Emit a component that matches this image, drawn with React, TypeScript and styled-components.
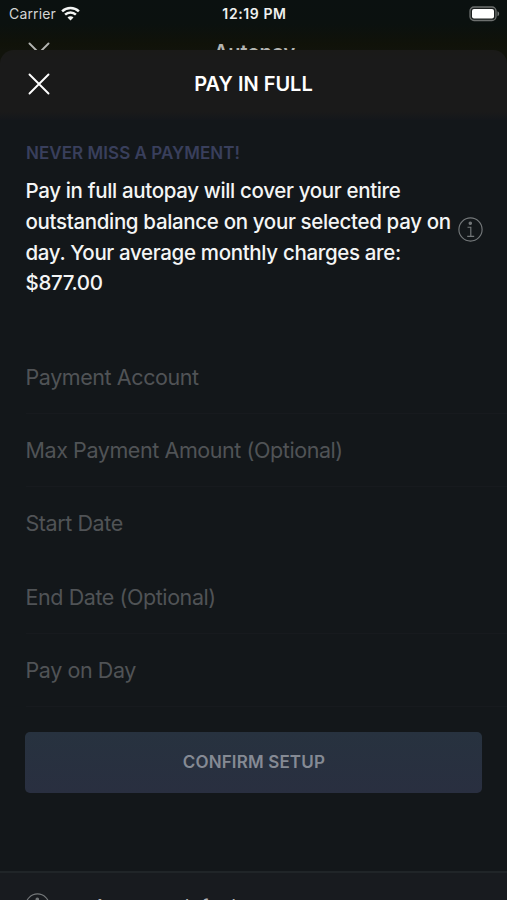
import React from 'react';
import styled, { createGlobalStyle } from 'styled-components';

const GlobalStyle = createGlobalStyle`
  * { box-sizing: border-box; }
  body { margin: 0; background: #13171a; }
`;

const Screen = styled.div`
  display: flex;
  flex-direction: column;
  width: 507px;
  height: 900px;
  overflow: hidden;
  font-family: Inter, 'Liberation Sans', sans-serif;
  background: #13171a;
`;

const Backdrop = styled.div`
  height: 50px;
  overflow: hidden;
  background: linear-gradient(#0b1110 0, #0b110f 24px, #101209 44px, #11130b 50px);
`;

const StatusBar = styled.div`
  display: grid;
  grid-template-columns: 1fr auto 1fr;
  align-items: center;
  height: 28px;
  padding: 0 7px 0 9px;
  color: #f0f1f0;
`;

const Carrier = styled.div`
  display: flex;
  align-items: center;
  gap: 5px;
  font-size: 14px;
  line-height: 28px;
  letter-spacing: 0.15px;
  color: #d3d5d4;
`;

const Clock = styled.time`
  margin-top: -1px;
  font-size: 14px;
  font-weight: 600;
  letter-spacing: 0.6px;
`;

const Battery = styled.svg`
  justify-self: end;
  margin-top: -1px;
`;

const Wifi = styled.svg`
  margin-top: -2px;
`;

const NavBar = styled.div<{ $behind?: boolean }>`
  display: grid;
  grid-template-columns: 72px 1fr 100px;
  align-items: center;
  height: 70px;
  margin-top: ${p => (p.$behind ? '-10px' : '0')};
  padding-left: 28px;
  padding-bottom: ${p => (p.$behind ? '0' : '2px')};
  color: ${p => (p.$behind ? '#b4b5b2' : '#ffffff')};
`;

const CloseButton = styled.button`
  display: flex;
  width: 22px;
  padding: 0;
  border: 0;
  background: none;
  color: inherit;
`;

const Title = styled.h1`
  margin: 0;
  font-size: 20px;
  font-weight: 600;
  line-height: 24px;
  text-align: center;
`;

const BehindTitle = styled(Title)`
  padding-left: 2px;
  padding-bottom: 2px;
`;

const SheetTop = styled.div`
  background: #11130b;
`;

const SheetHeader = styled.header`
  height: 70px;
  border-radius: 14px 14px 0 0;
  background: linear-gradient(#1a1a18 0, #1a1a1a 10px, #1a1a1a 62px, #14171b 70px);
`;

const Content = styled.main`
  flex: 1;
  padding-top: 20.5px;
`;

const Eyebrow = styled.h2`
  margin: 0 0 9.5px 26px;
  font-size: 17px;
  font-weight: 600;
  line-height: 25px;
  letter-spacing: 0.05px;
  color: #393f5c;
`;

const Summary = styled.div`
  display: flex;
  align-items: center;
  gap: 5px;
  height: 124px;
  padding-left: 25.5px;
`;

const Copy = styled.p`
  width: 427px;
  margin: 1px 0 0;
  font-size: 20.5px;
  font-weight: 500;
  line-height: 30.8px;
  letter-spacing: -0.34px;
  white-space: nowrap;
  color: #f4f5f5;
`;

const SummaryInfo = styled.div`
  display: flex;
  margin-top: -15px;
  color: #74787a;
`;

const Form = styled.div`
  display: flex;
  flex-direction: column;
  margin-top: 41.5px;
`;

const Field = styled.label<{ $line: boolean }>`
  height: 73.3px;
  margin-left: 25.5px;
  padding-top: 21.3px;
  font-size: 21.5px;
  line-height: 30px;
  letter-spacing: -0.42px;
  color: #505356;
  border-bottom: 1px solid ${p => (p.$line ? '#171a1e' : 'transparent')};
`;

const ConfirmButton = styled.button`
  display: block;
  width: 457px;
  height: 61px;
  margin: 25px 0 0 25.4px;
  padding: 0;
  border: 0;
  border-radius: 5px;
  font: 600 17px Inter, sans-serif;
  letter-spacing: 0.15px;
  color: #858a94;
  background: linear-gradient(#27323f, #292f40);
`;

const Footer = styled.footer`
  display: flex;
  align-items: flex-start;
  gap: 43px;
  height: 29px;
  overflow: hidden;
  padding: 20px 0 0 25px;
  border-top: 2px solid #202528;
  background: #181b1f;
  color: #74787a;
`;

const FooterText = styled.span`
  padding-top: 2px;
  font-size: 20px;
  line-height: 24px;
  white-space: nowrap;
  color: #b2b4b6;
`;

const fields = [
  { label: 'Payment Account', line: true },
  { label: 'Max Payment Amount (Optional)', line: true },
  { label: 'Start Date', line: false },
  { label: 'End Date (Optional)', line: true },
  { label: 'Pay on Day', line: true },
];

const CloseIcon = () => (
  <svg width="22" height="22" viewBox="0 0 22 22" fill="none" stroke="currentColor" strokeWidth="1.9" strokeLinecap="round">
    <path d="M1.5 1.5 20.5 20.5M20.5 1.5 1.5 20.5" />
  </svg>
);

const InfoIcon = () => (
  <svg width="25" height="25" viewBox="0 0 25 25" fill="none" stroke="currentColor" strokeWidth="1.15">
    <circle cx="12.5" cy="12.5" r="11.6" />
    <circle cx="12.3" cy="6.2" r="1.2" fill="currentColor" />
    <path d="M9.5 10.2h3.3v9M9.2 19.4h7" />
  </svg>
);

const WifiIcon = () => (
  <Wifi width="19" height="15" viewBox="0 0 19 15" fill="none" stroke="#f4f5f4" strokeWidth="2.5">
    <path d="M1.1 5.4C5.8.9 13.2.9 17.9 5.4" />
    <path d="M4.1 8.7c3-2.9 7.8-2.9 10.8 0" />
    <path d="M9.5 14.5 6.5 11.5c1.6-1.6 4.4-1.6 6 0Z" fill="#f4f5f4" stroke="none" />
  </Wifi>
);

export default function App() {
  return (
    <Screen>
      <GlobalStyle />
      <Backdrop>
        <StatusBar>
          <Carrier>Carrier<WifiIcon /></Carrier>
          <Clock>12:19 PM</Clock>
          <Battery width="31" height="16" viewBox="0 0 31 16">
            <rect x="1" y="1" width="26" height="13.5" rx="4" fill="#1c201f" stroke="#6d706f" strokeWidth="1.3" />
            <rect x="3" y="3" width="22" height="9.5" rx="2" fill="#fff" />
            <path d="M28.5 5.2c2.2.8 2.2 4.2 0 5Z" fill="#777a79" />
          </Battery>
        </StatusBar>
        <NavBar $behind>
          <CloseButton tabIndex={-1} aria-hidden><CloseIcon /></CloseButton>
          <BehindTitle as="div">Autopay</BehindTitle>
        </NavBar>
      </Backdrop>
      <SheetTop>
        <SheetHeader>
          <NavBar>
            <CloseButton aria-label="Close"><CloseIcon /></CloseButton>
            <Title>PAY IN FULL</Title>
          </NavBar>
        </SheetHeader>
      </SheetTop>
      <Content>
        <Eyebrow>NEVER MISS A PAYMENT!</Eyebrow>
        <Summary>
          <Copy>
            Pay in full autopay will cover your entire<br />
            outstanding balance on your selected pay on<br />
            day. Your average monthly charges are:<br />
            $877.00
          </Copy>
          <SummaryInfo><InfoIcon /></SummaryInfo>
        </Summary>
        <Form>
          {fields.map(f => <Field key={f.label} $line={f.line}>{f.label}</Field>)}
        </Form>
        <ConfirmButton>CONFIRM SETUP</ConfirmButton>
      </Content>
      <Footer>
        <InfoIcon />
        <FooterText>Autopay default</FooterText>
      </Footer>
    </Screen>
  );
}
